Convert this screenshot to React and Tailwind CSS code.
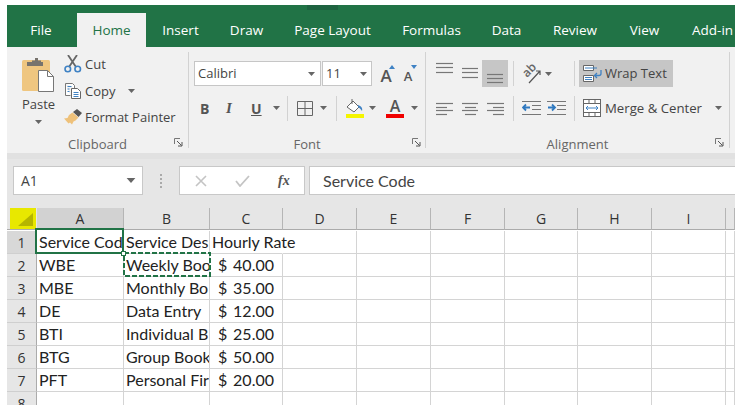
const tabs = [
  { label: 'File', cls: 'ml-[4px] w-[60px]' },
  { label: 'Home', cls: 'ml-[6px] w-[69px]', active: true },
  { label: 'Insert', cls: 'w-[69px]' },
  { label: 'Draw', cls: 'w-[63px]' },
  { label: 'Page Layout', cls: 'w-[109px]' },
  { label: 'Formulas', cls: 'w-[89px]' },
  { label: 'Data', cls: 'w-[61px]' },
  { label: 'Review', cls: 'w-[76px]' },
  { label: 'View', cls: 'w-[63px]' },
  { label: 'Add-in', cls: 'ml-[16px] w-[43px] justify-start' },
];

const columns = ['A', 'B', 'C', 'D', 'E', 'F', 'G', 'H', 'I', ''];

// only what the narrow columns leave visible, the rest of each string is cut off
const rows = [
  ['Service Code', 'Service Des', null, 'Hourly Rate'],
  ['WBE', 'Weekly Boo', '40.00'],
  ['MBE', 'Monthly Bo', '35.00'],
  ['DE', 'Data Entry', '12.00'],
  ['BTI', 'Individual B', '25.00'],
  ['BTG', 'Group Book', '50.00'],
  ['PFT', 'Personal Fir', '20.00'],
  ['', '', ''],
];

const uiFont = "font-['Open_Sans',sans-serif]";
const cellFont = "font-['Lato',sans-serif]";

function Caret({ className = '' }) {
  return (
    <svg width="7" height="4" viewBox="0 0 7 4" className={className}>
      <path d="M0 0h7L3.5 4z" fill="#666" />
    </svg>
  );
}

function Launcher({ className = '' }) {
  return (
    <svg width="9" height="9" viewBox="0 0 9 9" className={`absolute bottom-[1px] ${className}`}>
      <path d="M.5 6V.5H6" fill="none" stroke="#777" />
      <path d="M3 3l4.500 4.500M8 4v4H4" fill="none" stroke="#555" />
    </svg>
  );
}

function Sep({ className = '' }) {
  return <div className={`w-px bg-[#d2d2d2] ${className}`} />;
}

function Lines({ ys, widths, x = [], height = 27 }) {
  return (
    <svg width="17" height={height} viewBox={`0 0 17 ${height}`}>
      {ys.map((y, i) => (
        <path key={y} d={`M${x[i] || 0} ${y + 0.5}h${widths[i]}`} stroke="#777" strokeWidth="1.200" />
      ))}
    </svg>
  );
}

function GroupLabel({ children }) {
  return (
    <div className={`absolute inset-x-0 bottom-[-5px] text-center text-[13px] leading-[18px] text-[#666] ${uiFont}`}>
      {children}
    </div>
  );
}

function PasteIcon() {
  return (
    <svg width="33" height="34" viewBox="0 0 33 34">
      <rect x="0" y="2" width="28" height="31" rx="1.500" fill="#efc680" />
      <path d="M5 4h5V2.500h3V0h3v2.500h3V4h2v4H5z" fill="#77736d" />
      <path d="M16.500 12.500h9l6 6v15h-15z" fill="#fff" stroke="#777" />
      <path d="M25.500 12.500v6h6" fill="none" stroke="#777" />
    </svg>
  );
}

function CutIcon() {
  return (
    <svg width="18" height="18" viewBox="0 0 18 18">
      <path d="M4 0l8 12M13 0L5 12" stroke="#666" strokeWidth="1.800" fill="none" />
      <circle cx="3.800" cy="14" r="2.800" fill="none" stroke="#3f82c4" strokeWidth="1.600" />
      <circle cx="13.700" cy="14" r="2.800" fill="none" stroke="#3f82c4" strokeWidth="1.600" />
    </svg>
  );
}

function CopyIcon() {
  return (
    <svg width="18" height="18" viewBox="0 0 18 18">
      <path d="M1.500 1.500h7l2 2v3M1.500 1.500v12h5" fill="#fff" stroke="#777" />
      <path d="M3.500 4.500h4M3.500 7h2M3.500 9.500h2" stroke="#3f82c4" />
      <path d="M7.500 6.500h6l3 3v7h-9z" fill="#fff" stroke="#666" />
      <path d="M9.500 10.500h5M9.500 12.500h5M9.500 14.500h5" stroke="#3f82c4" />
    </svg>
  );
}

function BrushIcon() {
  return (
    <svg width="18" height="16" viewBox="0 0 18 16">
      <path d="M9 3l4-3 5 4-3.500 4z" fill="#555" />
      <path d="M8.500 3.500l6 5-3 3-2 1-1.500 3-2-2-1.500 1L0 9.500l3.500-.5 1.500-3z" fill="#eec17a" />
    </svg>
  );
}

function FontGrow({ small, up }) {
  return (
    <div className="relative flex h-[24px] w-[20px] items-center justify-center">
      <span className={`${uiFont} font-semibold leading-none text-[#555] ${small ? 'mt-[5px] text-[13px]' : 'mt-[3px] text-[17px]'}`}>A</span>
      <svg width="6" height="4" viewBox="0 0 6 4" className="absolute right-[1px] top-[3px]">
        <path d={up ? 'M0 4h6L3 0z' : 'M0 0h6L3 4z'} fill="#3f82c4" />
      </svg>
    </div>
  );
}

function OrientIcon() {
  return (
    <div className="relative h-[22px] w-[19px]">
      <span className={`absolute left-[0px] top-[1px] rotate-[-45deg] text-[12px] font-semibold leading-[12px] text-[#666] ${uiFont}`}>ab</span>
      <svg width="19" height="22" viewBox="0 0 19 22" className="absolute inset-0">
        <path d="M7 20L18 8M14 8h4v4" fill="none" stroke="#555" strokeWidth="1.200" />
      </svg>
    </div>
  );
}

function WrapIcon() {
  return (
    <svg width="20" height="18" viewBox="0 0 20 18">
      <path d="M.5.500h10v5H.5zM.5 10.500h10v6H.5z" fill="#fff" stroke="#666" />
      <path d="M2 3h12M2 12.500h7M2 14.500h7" stroke="#3f82c4" />
      <path d="M18 5v3.500a2 2 0 0 1-2 2h-4M14 8l-2.500 2.500 2.500 2.500" fill="none" stroke="#3f82c4" strokeWidth="1.300" />
    </svg>
  );
}

function MergeIcon() {
  return (
    <svg width="18" height="18" viewBox="0 0 18 18">
      <rect x=".5" y=".5" width="17" height="17" fill="#fff" stroke="#666" />
      <path d="M6 .5v4M12 .5v4M.5 4.500h17M.5 13.500h17M6 13.500v4M12 13.500v4" stroke="#666" />
      <path d="M3 9h12M5 7L3 9l2 2M13 7l2 2-2 2" fill="none" stroke="#3f82c4" />
    </svg>
  );
}

function IndentIcon({ flip }) {
  return (
    <svg width="19" height="15" viewBox="0 0 19 15">
      <path d="M0 .500h19M10 4.500h9M10 8.500h9M0 13.500h19" stroke="#777" />
      <path d={flip ? 'M1 6.500h6M5 3.500l3 3-3 3' : 'M8 6.500H2M4 3.500l-3 3 3 3'} fill="none" stroke="#2f79c0" strokeWidth="1.800" />
    </svg>
  );
}

function ClipboardGroup() {
  return (
    <div className="relative h-full w-[182px] shrink-0 border-r border-[#d2d2d2]">
      <div className="flex pl-[15px] pt-[3px]">
        <div className={`mt-[3px] flex w-[33px] flex-col items-center text-[13px] leading-[16px] text-[#444] ${uiFont}`}>
          <PasteIcon />
          <span className="mt-[4px]">Paste</span>
          <Caret className="mt-[8px]" />
        </div>
        <div className={`ml-[9px] flex flex-col gap-[8.500px] text-[13px] leading-[18px] text-[#444] ${uiFont}`}>
          <div className="flex items-center gap-[3px]"><CutIcon /><span>Cut</span></div>
          <div className="flex items-center gap-[3px]"><CopyIcon /><span>Copy</span><Caret className="ml-[10px]" /></div>
          <div className="flex items-center gap-[3px]"><BrushIcon /><span className="whitespace-nowrap">Format Painter</span></div>
        </div>
      </div>
      <GroupLabel>Clipboard</GroupLabel>
      <Launcher className="right-[5px]" />
    </div>
  );
}

function FontGroup() {
  return (
    <div className="relative h-full w-[237px] shrink-0 border-r border-[#d2d2d2]">
      <div className="flex items-center pl-[5px] pt-[9px]">
        <div className={`flex h-[25px] w-[127px] items-center justify-between border border-[#c6c6c6] bg-white pl-[3px] pr-[5px] text-[13px] text-[#444] ${uiFont}`}>
          Calibri <Caret />
        </div>
        <div className={`ml-[1px] flex h-[25px] w-[50px] items-center justify-between border border-[#c6c6c6] bg-white pl-[3px] pr-[4px] text-[13px] text-[#444] ${uiFont}`}>
          11 <Caret />
        </div>
        <div className="ml-[4px] flex gap-[2px]">
          <FontGrow up />
          <FontGrow small />
        </div>
      </div>
      <div className="mt-[9px] flex h-[26px] items-center pl-[11px]">
        <span className={`w-[26px] text-[14px] font-bold text-[#555] ${uiFont}`}>B</span>
        <span className="w-[25px] font-['Liberation_Serif',serif] text-[15px] font-bold italic text-[#555]">I</span>
        <span className={`w-[22px] text-[14px] font-bold text-[#555] underline ${uiFont}`}>U</span>
        <Caret />
        <Sep className="ml-[7px] h-[25px]" />
        <svg width="16" height="15" viewBox="0 0 16 15" className="ml-[9px]">
          <path d="M.5.500h15v14H.5zM8 .5v14M.5 7.500h15" fill="none" stroke="#666" />
        </svg>
        <Caret className="ml-[7px]" />
        <Sep className="ml-[9px] h-[25px]" />
        <svg width="20" height="20" viewBox="0 0 20 20" className="ml-[8px]">
          <path d="M2 9l6-6 6 6-5 5z" fill="#fff" stroke="#666" />
          <path d="M7 1v5" stroke="#666" />
          <path d="M13 7c3 1 5 3 4 6-1-1-2-3-4-4z" fill="#3f82c4" />
          <rect x="1" y="16" width="18" height="4" fill="#f5f500" />
        </svg>
        <Caret className="ml-[4px]" />
        <div className="relative ml-[10px] flex h-[20px] w-[18px] justify-center">
          <span className={`text-[16px] font-semibold leading-[17px] text-[#555] ${uiFont}`}>A</span>
          <div className="absolute inset-x-0 bottom-0 h-[4px] bg-[#f00000]" />
        </div>
        <Caret className="ml-[7px]" />
      </div>
      <GroupLabel>Font</GroupLabel>
      <Launcher className="right-[4px]" />
    </div>
  );
}

function AlignmentGroup() {
  return (
    <div className="relative h-full w-[304px] shrink-0 border-r border-[#d2d2d2]">
      <div className="mt-[8px] flex h-[27px] items-center pl-[10px]">
        <div className="w-[26px]"><Lines ys={[3, 7, 12]} widths={[17, 17, 17]} /></div>
        <div className="w-[20px]"><Lines ys={[8, 12, 17]} widths={[16, 16, 16]} /></div>
        <div className="flex h-[27px] w-[26px] items-center justify-center bg-[#c6c6c6]"><Lines ys={[14, 18, 22]} widths={[16, 16, 16]} /></div>
        <Sep className="ml-[5px] h-[25px]" />
        <div className="ml-[8px]"><OrientIcon /></div>
        <Caret className="ml-[4px]" />
        <Sep className="ml-[22px] h-[25px]" />
        <div className={`ml-[4px] flex h-[27px] w-[94px] items-center gap-[2px] bg-[#c6c6c6] pl-[4px] text-[13px] text-[#444] ${uiFont}`}>
          <WrapIcon />
          <span className="whitespace-nowrap">Wrap Text</span>
        </div>
      </div>
      <div className="mt-[8px] flex h-[26px] items-center pl-[10px]">
        <div className="w-[26px]"><Lines height={26} ys={[8, 12, 15, 19]} widths={[17, 11, 17, 11]} /></div>
        <div className="w-[25px]"><Lines height={26} ys={[8, 12, 15, 19]} widths={[16, 11, 16, 11]} x={[0, 3, 0, 3]} /></div>
        <div className="w-[21px]"><Lines height={26} ys={[8, 12, 15, 19]} widths={[17, 11, 17, 11]} x={[0, 6, 0, 6]} /></div>
        <Sep className="ml-[5px] h-[25px]" />
        <div className="ml-[8px]"><IndentIcon /></div>
        <div className="ml-[6px]"><IndentIcon flip /></div>
        <Sep className="ml-[8px] h-[25px]" />
        <div className="ml-[8px]"><MergeIcon /></div>
        <span className={`ml-[4px] mt-[2px] whitespace-nowrap text-[13.200px] text-[#444] ${uiFont}`}>Merge &amp; Center</span>
        <Caret className="ml-[13px]" />
      </div>
      <GroupLabel>Alignment</GroupLabel>
      <Launcher className="right-[5px]" />
    </div>
  );
}

function FormulaBar() {
  return (
    <div className="flex h-[49px] bg-[#e6e6e6] pl-[6px] pt-[7px]">
      <div className={`flex h-[29px] w-[130px] items-center justify-between border border-[#c8c8c8] bg-white pl-[7px] pr-[6px] text-[14px] text-[#444] ${uiFont}`}>
        A1 <Caret className="h-[5px] w-[10px]" />
      </div>
      <div className="flex h-[29px] w-[36px] flex-col items-center justify-center gap-[2px]">
        <div className="h-[2px] w-[2px] bg-[#aaa]" />
        <div className="h-[2px] w-[2px] bg-[#aaa]" />
        <div className="h-[2px] w-[2px] bg-[#aaa]" />
        <div className="h-[2px] w-[2px] bg-[#aaa]" />
      </div>
      <div className="flex h-[29px] w-[126px] items-center border border-[#c8c8c8] bg-white pl-[15px]">
        <svg width="12" height="12" viewBox="0 0 12 12"><path d="M1 1l10 10M11 1L1 11" stroke="#c4c4c4" strokeWidth="1.600" /></svg>
        <svg width="15" height="12" viewBox="0 0 15 12" className="ml-[28px]"><path d="M1 6l4 5 9-10" fill="none" stroke="#c4c4c4" strokeWidth="1.800" /></svg>
        <span className="ml-[28px] font-['Liberation_Serif',serif] text-[14px] font-bold italic text-[#555]">fx</span>
      </div>
      <div className={`ml-[4px] flex h-[29px] flex-1 items-center border-y border-l border-[#c8c8c8] bg-white pl-[13px] text-[16px] text-[#444] ${cellFont}`}>
        Service Code
      </div>
    </div>
  );
}

function Sheet() {
  return (
    <div className={`relative grid h-[197px] grid-cols-[30px_87px_86px_73px_74px_74px_74px_73px_74px_74px_9px] auto-rows-[23px] overflow-hidden ${cellFont}`}>
      <div className="relative h-[22px] border-b border-[#ababab] bg-[#e6e6e6]">
        <div className="absolute inset-y-0 left-[3px] right-[1px] flex items-end justify-end bg-[#e8e800] pb-[3px] pr-[3px]">
          <svg width="15" height="13" viewBox="0 0 15 13"><path d="M15 0v13H0z" fill="#b5b500" /></svg>
        </div>
      </div>
      {columns.map((col, i) => (
        <div
          key={col || 'J'}
          className={`flex h-[22px] items-center justify-center border-b border-r border-b-[#ababab] border-r-[#b5b5b5] text-[14px] text-[#333] ${i === 0 ? 'bg-[#d2d2d2]' : 'bg-[#e6e6e6]'} ${uiFont}`}
        >
          {col}
        </div>
      ))}
      {rows.map((row, r) => (
        <div key={r} className="contents">
          <div className={`flex h-[23px] items-center justify-center border-b border-r border-b-[#cfcfcf] border-r-[#ababab] text-[14px] text-[#333] ${r === 0 ? 'bg-[#d8d8d8]' : 'bg-[#e6e6e6]'} ${uiFont}`}>
            {r + 1}
          </div>
          {columns.map((_, c) => {
            const overflow = r === 0 && c === 2;
            return (
              <div
                key={c}
                className={`flex h-[23px] items-center whitespace-nowrap border-b border-r border-[#d4d4d4] bg-white pl-[2px] text-[16px] text-[#222] ${overflow ? 'relative z-10 overflow-visible border-r-transparent' : 'overflow-hidden'}`}
              >
                {r === 0 && c === 0 && row[0]}
                {r === 0 && c === 1 && row[1]}
                {overflow && row[3]}
                {r > 0 && c < 2 && row[c]}
                {r > 0 && r < 7 && c === 2 && (
                  <div className="flex w-full justify-between pl-[6px] pr-[8px]">
                    <span>$</span>
                    <span>{row[2]}</span>
                  </div>
                )}
              </div>
            );
          })}
        </div>
      ))}
      <div className="pointer-events-none absolute left-[28px] top-[20px] z-20 h-[26px] w-[89px] border-2 border-[#217346]" />
      <svg width="88" height="25" viewBox="0 0 88 25" className="pointer-events-none absolute left-[116px] top-[44px] z-20">
        <rect x="1" y="1" width="86" height="23" fill="none" stroke="#217346" strokeWidth="2" strokeDasharray="5 2" />
      </svg>
      <div className="pointer-events-none absolute left-[114px] top-[43px] z-30 h-[5px] w-[5px] border border-[#217346] bg-white" />
    </div>
  );
}

export default function App() {
  return (
    <div className="h-[410px] w-[741px] overflow-hidden bg-white pl-[7px] pr-[6px] pt-[5px]">
      <div className={`relative flex h-[42px] items-end bg-[#217346] text-[13.500px] text-white ${uiFont}`}>
        <div className="absolute left-[300px] top-0 h-[5px] w-[31px] bg-[#1e6340]" />
        {tabs.map((tab) => (
          <div
            key={tab.label}
            className={`flex h-[34px] items-center justify-center whitespace-nowrap ${tab.cls} ${tab.active ? 'bg-[#f1f1f1] text-[#217346]' : ''}`}
          >
            {tab.label}
          </div>
        ))}
      </div>
      <div className="flex h-[106px] bg-[#f1f1f1] py-[5px]">
        <ClipboardGroup />
        <FontGroup />
        <AlignmentGroup />
      </div>
      <div className="h-[6px] bg-[#e1e1e1]" />
      <FormulaBar />
      <Sheet />
    </div>
  );
}
